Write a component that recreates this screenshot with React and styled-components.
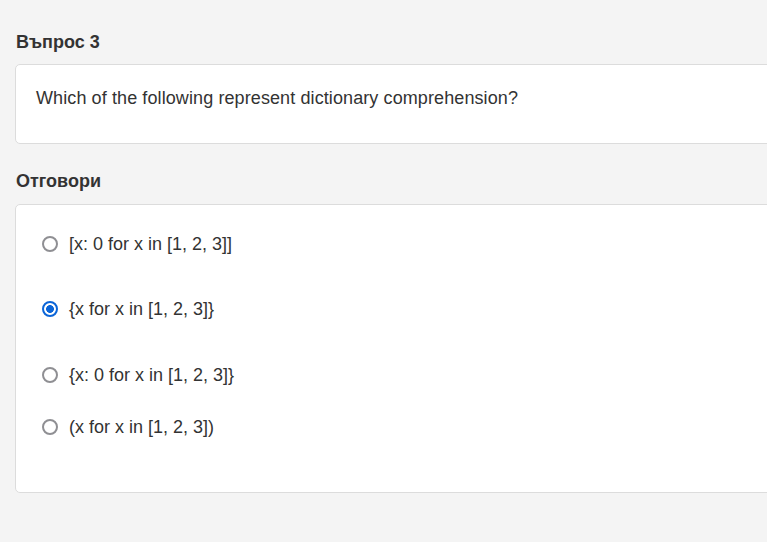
import styled, { createGlobalStyle } from "styled-components";

const GlobalStyle = createGlobalStyle`
  html, body {
    margin: 0;
    padding: 0;
    overflow: hidden;
    background: #f4f4f4;
  }
  body {
    font-family: "Liberation Sans", Arial, sans-serif;
    color: #333;
  }
`;

const options = [
  { id: "a", text: "[x: 0 for x in [1, 2, 3]]", space: 41 },
  { id: "b", text: "{x for x in [1, 2, 3]}", space: 42 },
  { id: "c", text: "{x: 0 for x in [1, 2, 3]}", space: 28 },
  { id: "d", text: "(x for x in [1, 2, 3])", space: 0 },
];

const App = () => {
  return (
    <Page>
      <GlobalStyle />
      <Heading>Въпрос 3</Heading>
      <QuestionCard>Which of the following represent dictionary comprehension?</QuestionCard>
      <Heading>Отговори</Heading>
      <AnswerCard>
        {options.map((item) => (
          <Option key={item.id} $space={item.space}>
            <Radio type="radio" name="answer" defaultChecked={item.id === "b"} />
            <span>{item.text}</span>
          </Option>
        ))}
      </AnswerCard>
    </Page>
  );
};

const Page = styled.div`
  width: 1000px;
  padding: 32px 0 0 15px;
  display: flex;
  flex-direction: column;
`;

const Heading = styled.h2`
  margin: 0 0 0 1px;
  font-size: 18px;
  line-height: 20px;
  font-weight: bold;
  color: #333;
`;

const Card = styled.div`
  background: #fff;
  border: 1px solid #dcdcdc;
  border-radius: 5px;
`;

const QuestionCard = styled(Card)`
  margin: 12px 0 27px;
  height: 80px;
  box-sizing: border-box;
  padding: 23px 20px 0;
  font-size: 18px;
  line-height: 20px;
  letter-spacing: 0.1px;
`;

const AnswerCard = styled(Card)`
  margin-top: 13px;
  height: 289px;
  box-sizing: border-box;
  padding: 27px 20px 0 26px;
  display: flex;
  flex-direction: column;
`;

const Option = styled.label`
  display: flex;
  align-items: center;
  gap: 11px;
  height: 24px;
  margin-bottom: ${(p) => p.$space}px;
  font-size: 18px;
  color: #333;
  cursor: pointer;
`;

const Radio = styled.input`
  appearance: none;
  margin: 0;
  width: 16px;
  height: 16px;
  border: 2px solid #8f8f93;
  border-radius: 50%;
  box-sizing: border-box;
  background: #fff;
  flex-shrink: 0;
  &:checked {
    border-color: #0b65d8;
    background: radial-gradient(circle, #0b65d8 0 3.6px, #fff 4.2px);
  }
`;

export default App;
